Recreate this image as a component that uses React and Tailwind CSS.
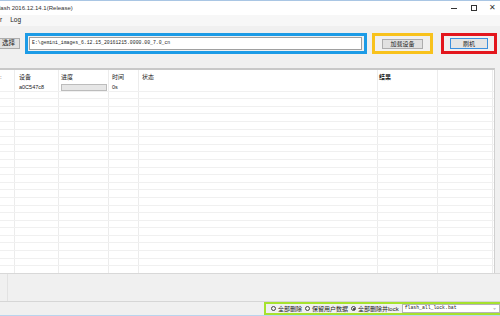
import React from "react";

const cols = [15, 44, 50, 30, 239, 60, 55];

function Row({ children, header }) {
  return (
    <div className={`flex ${header ? "h-[14px] items-center" : "h-[7.6px] border-b border-[#f0f0f0]"}`}>
      {cols.map((w, i) => (
        <div key={i} style={{ width: w }} className="h-full border-r border-[#ececec] shrink-0 relative">
          {children && children[i]}
        </div>
      ))}
    </div>
  );
}

export default function App() {
  const font = { fontFamily: '"Liberation Sans", "Noto Sans CJK SC", sans-serif' };
  const mono = { fontFamily: '"Liberation Mono", monospace' };
  const rows = Array.from({ length: 24 });
  return (
    <div className="w-[500px] h-[316px] bg-[#f0f0f0] flex flex-col overflow-hidden text-[#222]" style={font}>
      {/* title bar */}
      <div className="h-[15px] bg-white border-t border-[#a9c6e4] flex items-center relative shrink-0">
        <span className="text-[6px] leading-none ml-[-1px] text-[#333]">lash 2016.12.14.1(Release)</span>
        <div className="ml-auto flex items-center h-full">
          <div className="w-[20px] flex justify-center"><div className="w-[6px] h-px bg-[#333]" /></div>
          <div className="w-[20px] flex justify-center"><div className="w-[6px] h-[6px] border border-[#333]" /></div>
          <div className="w-[16px] flex justify-center text-[8px] leading-none text-[#333]">✕</div>
        </div>
      </div>
      {/* menu bar */}
      <div className="h-[11px] bg-[#f7f7f7] flex items-center text-[6.5px] leading-none shrink-0">
        <span className="ml-[0px]">r</span>
        <span className="ml-[8px]">Log</span>
      </div>
      {/* toolbar */}
      <div className="h-[42px] flex items-start pt-[7px] shrink-0">
        <div className="w-[20px] h-[11px] mt-[5px] bg-[#e1e1e1] border-y border-r border-[#adadad] text-[6.5px] leading-none flex items-center pl-[2px]">选择</div>
        <div className="ml-[5px] w-[342px] h-[21px] border-[3px] border-[#1c9be6] flex items-center pl-[1px]">
          <div className="w-[333px] h-[13px] bg-white border border-[#a0a0a0] flex items-center pl-[2px] text-[4.8px] leading-none" style={mono}>
            E:\gemini_images_6.12.15_20161215.0000.00_7.0_cn
          </div>
        </div>
        <div className="ml-[5px] w-[61px] h-[21px] border-[3px] border-[#f8c21c] flex items-center justify-center">
          <div className="w-[41px] h-[10px] bg-[#e1e1e1] border border-[#adadad] flex items-center justify-center text-[6px] leading-none">加载设备</div>
        </div>
        <div className="ml-[8px] w-[56px] h-[21px] border-[3px] border-[#e3161d] flex items-center justify-center">
          <div className="w-[38px] h-[11px] bg-[#e5e5e5] border border-[#3c8fdd] flex items-center justify-center text-[6px] leading-none">刷机</div>
        </div>
      </div>
      {/* list */}
      <div className="w-[495px] h-[205px] bg-white border-t-2 border-[#c8c8c8] border-r border-r-[#d0d0d0] shrink-0 overflow-hidden text-[6px] leading-none">
        <Row header>
          {[
            <span className="absolute left-[0px] top-[4px]">:</span>,
            <span className="absolute left-[4px] top-[4px]">设备</span>,
            <span className="absolute left-[2px] top-[4px]">进度</span>,
            <span className="absolute left-[3px] top-[4px]">时间</span>,
            <span className="absolute left-[3px] top-[4px]">状态</span>,
            <span className="absolute left-[1px] top-[4px] font-bold">结果</span>,
            null,
          ]}
        </Row>
        <Row>
          {[
            null,
            <span className="absolute left-[4px] top-[1px] text-[5.5px]">a0C547c8</span>,
            <div className="absolute left-[2px] right-[1px] top-0 h-[7px] bg-[#e6e6e6] border border-[#bcbcbc]" />,
            <span className="absolute left-[3px] top-[1px] text-[5.5px]">0s</span>,
            null,
            null,
            null,
          ]}
        </Row>
        {rows.map((_, i) => (
          <Row key={i} />
        ))}
      </div>
      {/* lower gray */}
      <div className="h-[28px] border-t border-[#d8d8d8] shrink-0 flex">
        <div className="w-[8px] h-full border-r border-[#e2e2e2]" />
      </div>
      {/* bottom strip */}
      <div className="h-[14px] border-t border-[#d6d6d6] flex items-stretch shrink-0">
        <div className="ml-auto w-[236px] border-2 border-[#a6e22e] border-r-0 bg-[#f0f0f0] flex items-center text-[6px] leading-none">
          <span className="ml-[5px] w-[5px] h-[5px] rounded-full border border-[#444]" />
          <span className="ml-[2px]">全部删除</span>
          <span className="ml-[3px] w-[5px] h-[5px] rounded-full border border-[#444]" />
          <span className="ml-[2px]">保留用户数据</span>
          <span className="ml-[3px] w-[5px] h-[5px] rounded-full border border-[#444] flex items-center justify-center"><span className="w-[2px] h-[2px] rounded-full bg-[#222]" /></span>
          <span className="ml-[2px]">全部删除并lock</span>
          <div className="ml-[3px] flex-1 h-[9px] bg-white border border-[#b5b5b5] flex items-center pl-[2px] text-[4.8px]" style={mono}>
            flash_all_lock.bat
            <span className="ml-auto mr-[3px] text-[5px] text-[#777]">⌄</span>
          </div>
        </div>
      </div>
      <div className="h-px bg-[#b9d4ee] shrink-0" />
    </div>
  );
}
